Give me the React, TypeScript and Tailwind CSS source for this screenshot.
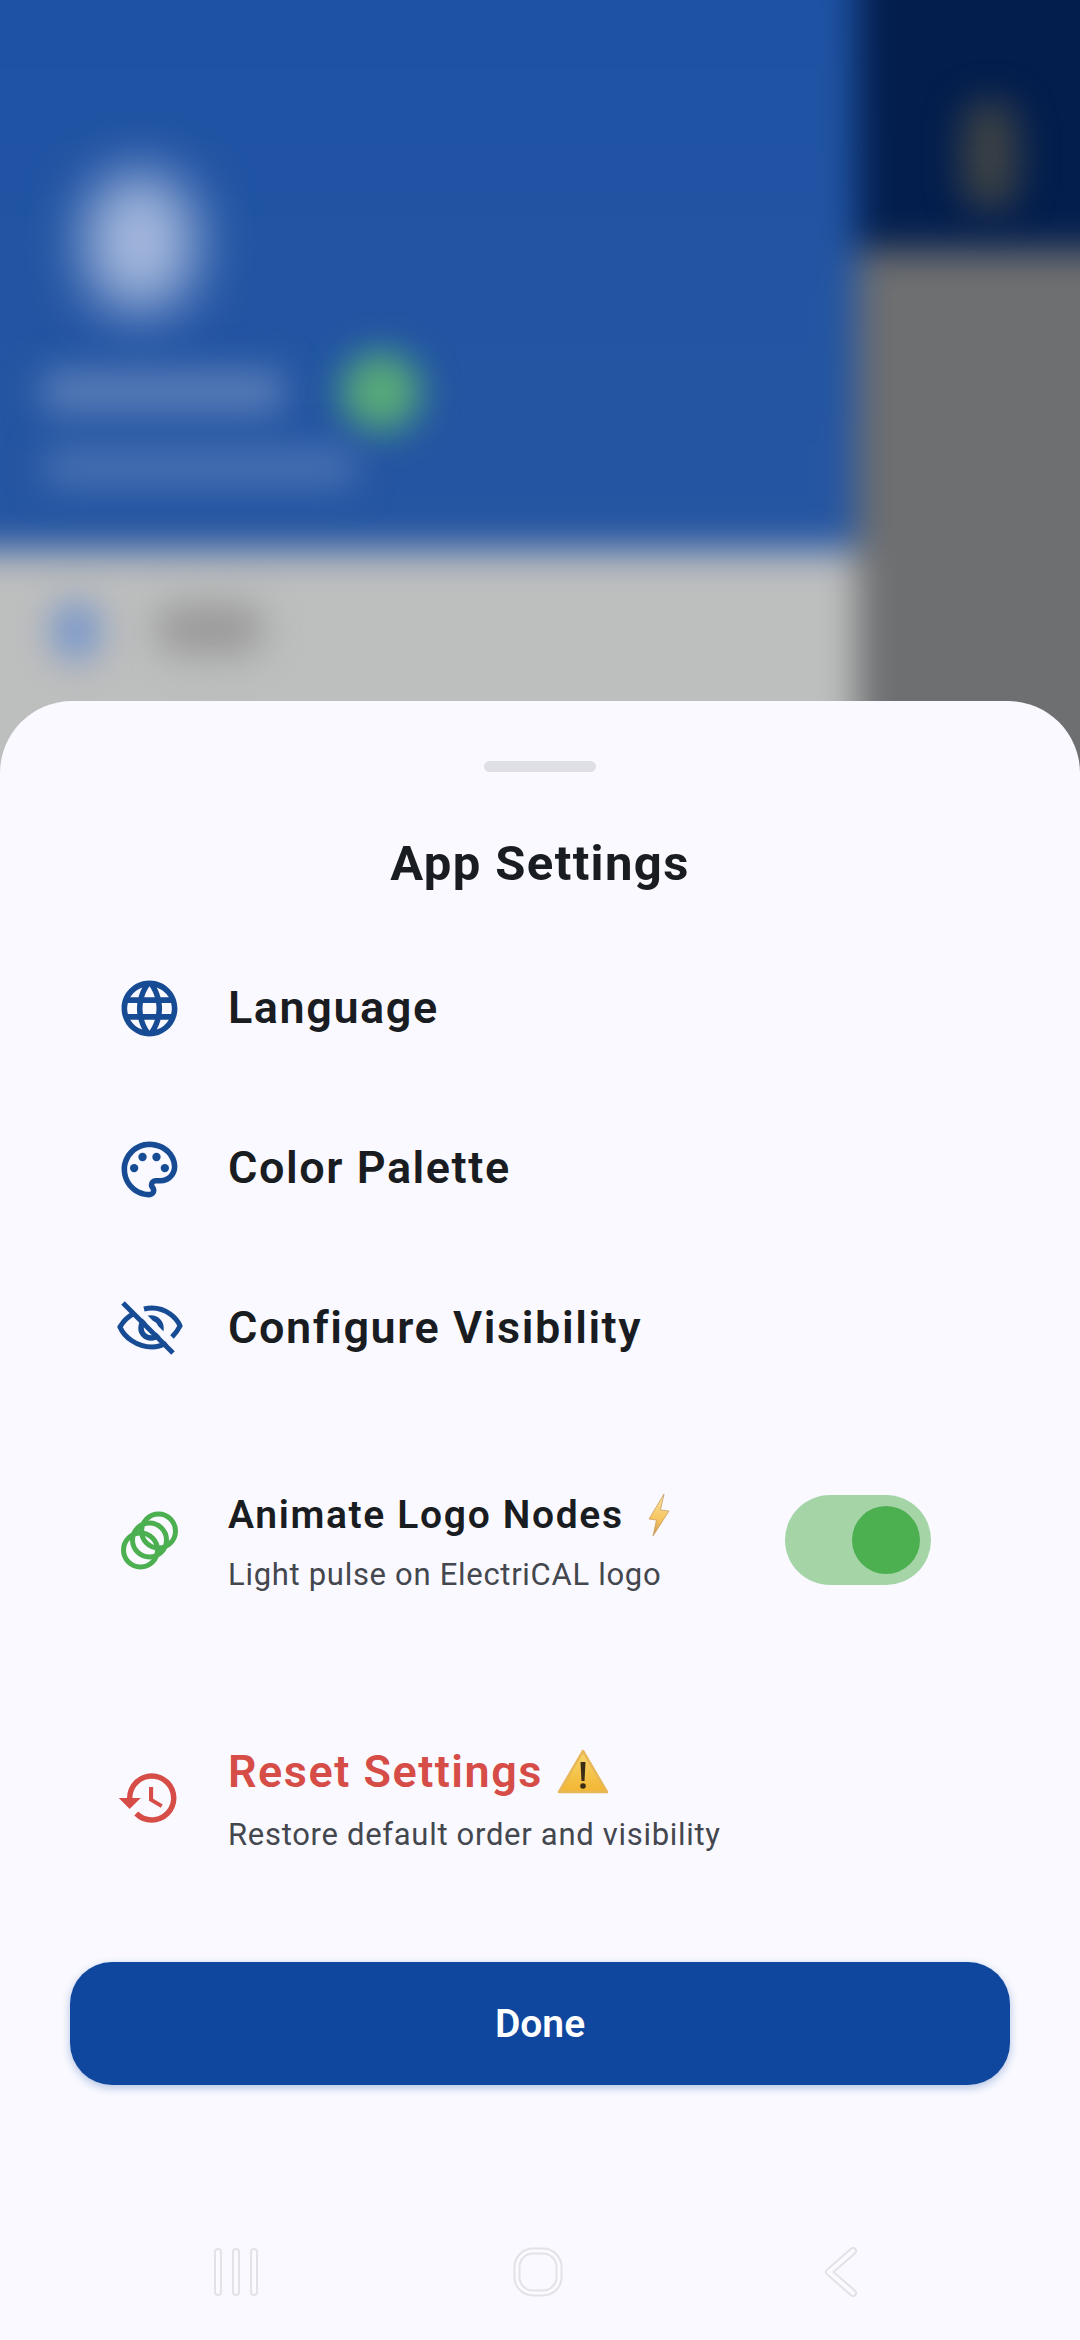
import React from 'react';
import { MdLanguage, MdOutlinePalette, MdHistory } from 'react-icons/md';

const BLUE = '#174c94';

const EyeOffIcon = () => (
  <svg viewBox="-1 -2 80 80" className="w-[80px] h-[80px]" fill="none">
    <path d="M23 24C14 29 12 34 10 37C14 47 27 57 42 57C48 57 53 55 57 53M34 19C36 18.500 39 18 42 18C56 18 67 28 70 36C68 40 65 44 62 47" stroke={BLUE} strokeWidth="5" />
    <circle cx="41" cy="38" r="10" stroke={BLUE} strokeWidth="5.500" />
    <path d="M18 10L68 60" stroke="#f9f9ff" strokeWidth="6" />
    <path d="M13 13L63 63" stroke={BLUE} strokeWidth="5" />
  </svg>
);

const RingsIcon = () => (
  <svg viewBox="-1 10 80 80" className="w-[80px] h-[80px]" fill="none" stroke="#4caf50" strokeWidth="5">
    <circle cx="48.500" cy="41" r="17" />
    <circle cx="39.500" cy="50" r="17" />
    <circle cx="30.500" cy="60" r="17" />
  </svg>
);

const BoltEmoji = () => (
  <svg viewBox="0 0 24 44" className="w-[24px] h-[44px] shrink-0">
    <defs>
      <linearGradient id="bolt" x1="0" y1="0" x2="0" y2="1">
        <stop offset="0" stopColor="#f9e3a0" />
        <stop offset="0.6" stopColor="#f7c560" />
        <stop offset="1" stopColor="#cf9350" />
      </linearGradient>
    </defs>
    <path d="M17 1L2 26L9.500 27L6 43L22 18L13.500 17Z" fill="url(#bolt)" stroke="#c9a063" strokeWidth="0.800" />
  </svg>
);

const WarnEmoji = () => (
  <svg viewBox="0 0 52 46" className="w-[52px] h-[46px] shrink-0">
    <defs>
      <linearGradient id="warn" x1="0" y1="0" x2="0" y2="1">
        <stop offset="0" stopColor="#f9d56c" />
        <stop offset="1" stopColor="#f2b632" />
      </linearGradient>
    </defs>
    <path d="M26 2L50 43H2Z" fill="url(#warn)" stroke="#e8b858" strokeWidth="2.500" strokeLinejoin="round" />
    <path d="M23.500 13H28.500L27.500 32H24.500Z" fill="#3a2c17" />
    <circle cx="26" cy="37" r="2.800" fill="#3a2c17" />
  </svg>
);

const rows = [
  { label: 'Language', icon: <MdLanguage className="w-[67px] h-[67px]" style={{ color: BLUE }} /> },
  { label: 'Color Palette', icon: <MdOutlinePalette className="w-[67px] h-[67px] mt-[2px]" style={{ color: BLUE }} /> },
  { label: 'Configure Visibility', icon: <EyeOffIcon /> },
];

export default function App() {
  return (
    <div className="relative w-[1080px] h-[2340px] overflow-hidden font-['Roboto',sans-serif]">
      {/* blurred app behind the sheet */}
      <div className="absolute top-0 left-0 w-[1080px] h-[800px] overflow-hidden">
        <div className="flex w-[1180px] h-[900px] -ml-[50px] -mt-[50px] blur-[18px]">
          <div className="flex flex-col w-[907px]">
            <div className="h-[600px] bg-gradient-to-b from-[#1d52a4] to-[#2556a2]" />
            <div className="flex-1 bg-[#bdbebe]" />
          </div>
          <div className="flex flex-col flex-1">
            <div className="h-[300px] bg-[#031e4d]" />
            <div className="flex-1 bg-[#6e6f70]" />
          </div>
        </div>
        <div className="absolute left-[85px] top-[172px] w-[110px] h-[140px] rounded-full bg-[#a5b8dc] blur-[28px]" />
        <div className="absolute left-[341px] top-[352px] w-[80px] h-[80px] rounded-full bg-[#58ab78] blur-[18px]" />
        <div className="absolute left-[43px] top-[370px] w-[240px] h-[44px] bg-[#5a7db8] blur-[18px]" />
        <div className="absolute left-[45px] top-[448px] w-[310px] h-[38px] bg-[#4a72b2] blur-[18px]" />
        <div className="absolute left-[50px] top-[600px] w-[52px] h-[62px] rounded-full bg-[#7f9bc8] blur-[16px]" />
        <div className="absolute left-[155px] top-[603px] w-[110px] h-[52px] rounded-full bg-[#9a9a9a] blur-[18px]" />
        <div className="absolute left-[962px] top-[100px] w-[56px] h-[110px] rounded-full bg-[#3d4244] blur-[18px]" />
      </div>

      <div className="relative mt-[701px] h-[1639px] rounded-t-[72px] bg-[#f9f9ff] pt-[60px] flex flex-col">
        <div className="mx-auto w-[112px] h-[11px] rounded-full bg-[#dfdfe6]" />
        <div className="mt-[62px] h-[60px] flex items-center justify-center text-[49px] font-bold text-[#191c20] tracking-[1.400px]">
          App Settings
        </div>

        <div className="mt-[34px] flex flex-col">
          {rows.map((row) => (
            <div key={row.label} className="h-[160px] flex items-center pl-[118px]">
              <div className="w-[62px] h-[80px] flex items-center justify-center shrink-0">
                <div className="shrink-0 -mx-[10px] flex">{row.icon}</div>
              </div>
              <span className="ml-[48px] text-[45px] font-semibold text-[#191c20] tracking-[1.550px]">{row.label}</span>
            </div>
          ))}
        </div>

        <div className="mt-[72px] h-[120px] flex items-center pl-[118px] pr-[149px]">
          <div className="w-[62px] h-[80px] flex items-center justify-center shrink-0">
            <div className="shrink-0 -mx-[10px] flex"><RingsIcon /></div>
          </div>
          <div className="ml-[48px] flex flex-col">
            <div className="flex items-center h-[60px]">
              <span className="text-[39px] font-semibold text-[#191c20] tracking-[1.660px]">Animate Logo Nodes</span>
              <span className="ml-[23px]"><BoltEmoji /></span>
            </div>
            <div className="mt-[10px] text-[31px] text-[#44474e] tracking-[0.700px] leading-[40px]">Light pulse on ElectriCAL logo</div>
          </div>
          <div className="ml-auto w-[146px] h-[90px] rounded-full bg-[#a5d4a7] flex items-center justify-end pr-[11px]">
            <div className="w-[68px] h-[68px] rounded-full bg-[#4caf50]" />
          </div>
        </div>

        <div className="mt-[140px] h-[120px] flex items-center pl-[118px]">
          <div className="w-[62px] h-[80px] flex items-center justify-center shrink-0">
            <MdHistory className="w-[66px] h-[66px] shrink-0 -mx-[2px] mb-[4px] text-[#d64c46]" />
          </div>
          <div className="ml-[48px] flex flex-col mb-[3px]">
            <div className="flex items-center h-[60px]">
              <span className="text-[45px] font-semibold text-[#d64c46] tracking-[1.500px]">Reset Settings</span>
              <span className="ml-[14px]"><WarnEmoji /></span>
            </div>
            <div className="mt-[13px] text-[31px] text-[#44474e] tracking-[0.700px] leading-[40px]">Restore default order and visibility</div>
          </div>
        </div>

        <button className="mt-[102px] mx-[70px] h-[123px] pt-[2px] rounded-[42px] bg-[#0f479e] text-white text-[39px] font-semibold shadow-[0_3px_8px_rgba(15,71,158,0.3)]">
          Done
        </button>

        <div className="mt-[162px] h-[50px] flex pl-[213px]">
          <svg viewBox="0 0 45 50" className="w-[45px] h-[50px]" fill="none" strokeLinecap="round">
            <path d="M5 5V45M23 5V45M41 5V45" stroke="#e2e2e8" strokeWidth="8" />
            <path d="M5 5V45M23 5V45M41 5V45" stroke="#fbfbff" strokeWidth="4" />
          </svg>
          <svg viewBox="0 0 50 50" className="ml-[255px] w-[50px] h-[50px]" fill="none">
            <rect x="4" y="4" width="42" height="42" rx="16" stroke="#e2e2e8" strokeWidth="7" />
            <rect x="4" y="4" width="42" height="42" rx="16" stroke="#fbfbff" strokeWidth="3" />
          </svg>
          <svg viewBox="0 0 36 50" className="ml-[261px] w-[36px] h-[50px]" fill="none" strokeLinecap="round" strokeLinejoin="round">
            <path d="M29 4L5 25L29 46" stroke="#e2e2e8" strokeWidth="8" />
            <path d="M29 4L5 25L29 46" stroke="#fbfbff" strokeWidth="4" />
          </svg>
        </div>
      </div>
    </div>
  );
}
